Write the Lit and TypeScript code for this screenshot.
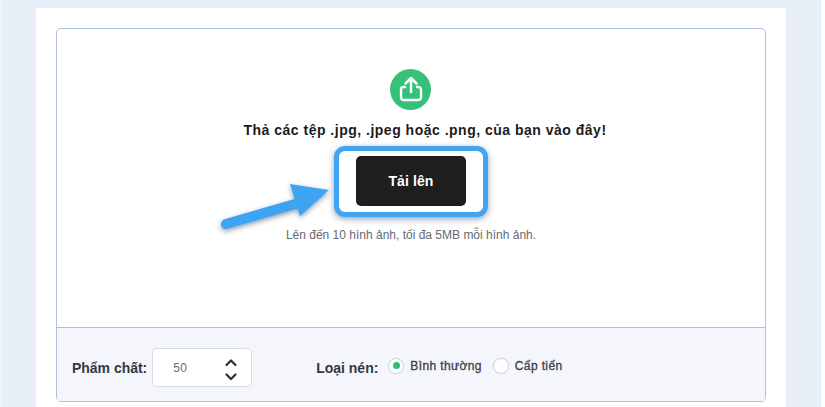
import { LitElement, html, css } from "lit";
import { customElement } from "lit/decorators.js";

@customElement("app-root")
export class AppRoot extends LitElement {
  static styles = css`
    :host { display: block; width: 825px; height: 407px; overflow: hidden; background: #fff; font-family: "Liberation Sans", Arial, sans-serif; }
    .page { height: 407px; box-sizing: border-box; margin-right: 4px; padding: 8px 35px 0 34px; border-left: 2px solid #eef3fa; background: #e9eff8; }
    .card { height: 399px; box-sizing: border-box; background: #fff; padding: 20px 20px 0 20px; }
    .panel { height: 374px; box-sizing: border-box; border: 1px solid #b0c1d8; border-radius: 5px; display: flex; flex-direction: column; overflow: hidden; }
    .drop { height: 298px; flex: none; display: flex; flex-direction: column; align-items: center; padding-top: 40px; box-sizing: border-box; position: relative; }
    .icon { width: 41px; height: 41px; display: block; margin-right: 1px; }
    h2 { margin: 12px 0 0 28px; font-size: 14px; line-height: 16px; font-weight: 700; color: #1c1c1c; letter-spacing: 0.5px; white-space: nowrap; }
    .btn-wrap { margin-top: 8px; padding: 5px 17px 6px; border: 5px solid #43a4f2; border-radius: 11px; box-shadow: 0 2px 6px rgba(40,70,110,.5); background: #fff; box-sizing: border-box; width: 154px; height: 71px; display: flex; }
    button { width: 110px; height: 50px; border: 0; border-radius: 5px; background: #1e1e1e; color: #fff; font: 700 14px "Liberation Sans", Arial, sans-serif; letter-spacing: .1px; padding: 0; }
    .hint { margin: 11px 0 0; font-size: 12px; line-height: 14px; color: #666a70; letter-spacing: 0; }
    .arrow { position: absolute; left: 160px; top: 150px; width: 125px; height: 60px; overflow: visible; }
    .foot { flex: 1; background: #f4f6fb; border-top: 1px solid #b0c1d8; display: flex; align-items: center; padding: 6px 0 0 15px; color: #33383f; font-size: 14px; }
    .lbl { font-weight: 700; letter-spacing: -.02px; white-space: nowrap; }
    .num { margin-left: 5px; width: 100px; height: 39px; box-sizing: border-box; border: 1px solid #d6dde7; border-radius: 5px; background: #fff; display: flex; align-items: center; justify-content: space-between; padding: 0 13px 0 20px; font-size: 12px; color: #666d76; letter-spacing: .3px; }
    .num svg { width: 14px; height: 26px; display: block; }
    .type { margin-left: 64px; }
    .radio { width: 16px; height: 16px; box-sizing: border-box; border: 1px solid #cfd6e0; border-radius: 50%; background: #fff; display: flex; align-items: center; justify-content: center; flex: none; box-shadow: 0 0 1px rgba(0,0,0,.1); }
    .radio i { width: 7px; height: 7px; border-radius: 50%; background: #2fbf71; display: block; }
    .opts { display: flex; align-items: center; margin-left: 10px; margin-top: -4px; }
    .opt { display: flex; align-items: center; gap: 6px; margin-right: 11px; font-size: 12px; letter-spacing: .38px; color: #3a414b; white-space: nowrap; }
    .opt span { -webkit-text-stroke: .3px #3a414b; }
  `;

  render() {
    return html`<div class="page"><div class="card"><div class="panel">
      <div class="drop">
        <svg class="icon" viewBox="0 0 41 41" aria-hidden="true">
          <circle cx="20.500" cy="20.500" r="20.500" fill="#35c178"></circle>
          <path d="M15 18h-1.500a2.500 2.500 0 0 0-2.500 2.500v8a2.500 2.500 0 0 0 2.500 2.500h15a2.500 2.500 0 0 0 2.500-2.500v-8a2.500 2.500 0 0 0-2.500-2.500h-1.500" fill="none" stroke="#fff" stroke-width="2.400" stroke-linecap="round"></path>
          <path d="M21 23V9M15.500 14.500l5.500-5.500 5.500 5.500" fill="none" stroke="#fff" stroke-width="2.500" stroke-linecap="round" stroke-linejoin="round"></path>
        </svg>
        <h2>Thả các tệp .jpg, .jpeg hoặc .png, của bạn vào đây!</h2>
        <div class="btn-wrap"><button>Tải lên</button></div>
        <p class="hint">Lên đến 10 hình ảnh, tối đa 5MB mỗi hình ảnh.</p>
        <svg class="arrow" viewBox="0 0 125 60" aria-hidden="true">
          <defs><filter id="s" x="-20%" y="-30%" width="140%" height="170%"><feDropShadow dx="0" dy="2" stdDeviation="2.500" flood-color="#1c3350" flood-opacity=".5"></feDropShadow></filter></defs>
          <g filter="url(#s)">
            <path d="M9 45 L85 23" stroke="#3ea3f3" stroke-width="10" stroke-linecap="round"></path>
            <path d="M73 5 L112 11 L83 37 Z" fill="#3ea3f3"></path>
          </g>
        </svg>
      </div>
      <div class="foot">
        <span class="lbl">Phẩm chất:</span>
        <div class="num"><span>50</span>
          <svg viewBox="0 0 14 26" aria-hidden="true"><path d="M2.500 10 7 5.500l4.500 4.500M2.500 19.500 7 24l4.500-4.500" fill="none" stroke="#2b3138" stroke-width="2.200" stroke-linecap="round" stroke-linejoin="round"></path></svg>
        </div>
        <span class="lbl type">Loại nén:</span>
        <div class="opts">
          <label class="opt"><div class="radio"><i></i></div><span>Bình thường</span></label>
          <label class="opt"><div class="radio"></div><span>Cấp tiến</span></label>
        </div>
      </div>
    </div></div></div>`;
  }
}
